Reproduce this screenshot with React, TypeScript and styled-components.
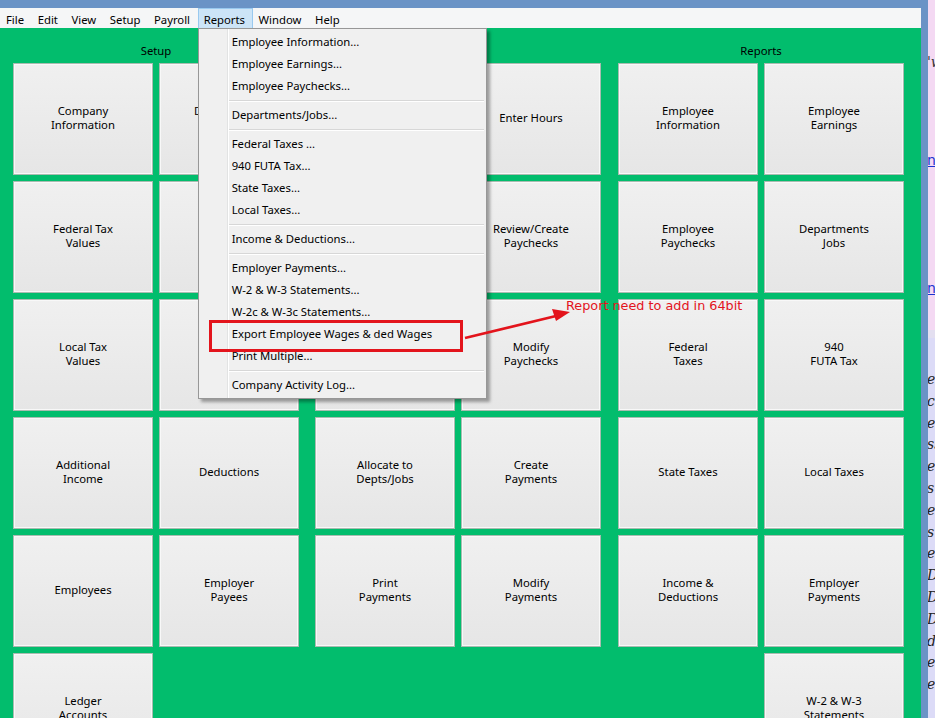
import { createGlobalStyle, styled } from 'styled-components'

type Label = string[] | null

interface Group {
  title: string
  buttons: Label[]
}

const groups: Group[] = [
  {
    title: 'Setup',
    buttons: [
      ['Company', 'Information'],
      ['Departments', 'Jobs'],
      ['Federal Tax', 'Values'],
      ['State Tax', 'Values'],
      ['Local Tax', 'Values'],
      ['Income', 'Types'],
      ['Additional', 'Income'],
      ['Deductions'],
      ['Employees'],
      ['Employer', 'Payees'],
      ['Ledger', 'Accounts'],
      null,
    ],
  },
  {
    title: 'Payroll',
    buttons: [
      ['Select', 'Employees'],
      ['Enter Hours'],
      ['Paycheck', 'Options'],
      ['Review/Create', 'Paychecks'],
      ['Print', 'Paychecks'],
      ['Modify', 'Paychecks'],
      ['Allocate to', 'Depts/Jobs'],
      ['Create', 'Payments'],
      ['Print', 'Payments'],
      ['Modify', 'Payments'],
      null,
      null,
    ],
  },
  {
    title: 'Reports',
    buttons: [
      ['Employee', 'Information'],
      ['Employee', 'Earnings'],
      ['Employee', 'Paychecks'],
      ['Departments', 'Jobs'],
      ['Federal', 'Taxes'],
      ['940', 'FUTA Tax'],
      ['State Taxes'],
      ['Local Taxes'],
      ['Income &', 'Deductions'],
      ['Employer', 'Payments'],
      null,
      ['W-2 & W-3', 'Statements'],
    ],
  },
]

const menuNames = ['File', 'Edit', 'View', 'Setup', 'Payroll', 'Reports', 'Window', 'Help']

// null marks a separator
const reportItems: (string | null)[] = [
  'Employee Information...',
  'Employee Earnings...',
  'Employee Paychecks...',
  null,
  'Departments/Jobs...',
  null,
  'Federal Taxes ...',
  '940 FUTA Tax...',
  'State Taxes...',
  'Local Taxes...',
  null,
  'Income & Deductions...',
  null,
  'Employer Payments...',
  'W-2 & W-3 Statements...',
  'W-2c & W-3c Statements...',
  'Export Employee Wages & ded Wages',
  'Print Multiple...',
  null,
  'Company Activity Log...',
]

const sideLines = ['e', 'ct', 'e', 'ss', 'e', 's', 'e', 's', 'e', 'D', 'D', 'D', 'd', 'e', 'e']

function App() {
  return (
    <>
      <GlobalStyle />
      <StScreen>
        <StWindow>
          <StTitleBar />
          <StMenuBar>
            {menuNames.map((name) => (
              <StMenuName key={name} $open={name === 'Reports'}>
                {name}
                {name === 'Reports' ? (
                  <StDropdown>
                    {reportItems.map((item, index) =>
                      item == null ? (
                        <StSeparator key={`sep${index}`} />
                      ) : (
                        <StDropItem key={item}>{item}</StDropItem>
                      )
                    )}
                  </StDropdown>
                ) : null}
              </StMenuName>
            ))}
          </StMenuBar>
          <StWorkspace>
            {groups.map((group) => (
              <StGroup key={group.title}>
                <StGroupTitle>{group.title}</StGroupTitle>
                <StButtonGrid>
                  {group.buttons.map((label, index) =>
                    label == null ? (
                      <div key={`empty${index}`} />
                    ) : (
                      <StTile key={`${group.title}${index}`}>
                        {label.map((line) => (
                          <span key={line}>{line}</span>
                        ))}
                      </StTile>
                    )
                  )}
                </StButtonGrid>
              </StGroup>
            ))}
          </StWorkspace>
        </StWindow>
        <StBackWindow>
          <StPinkPane>
            <StScrawl $top={54}>'w</StScrawl>
            <StLinkGlyph $top={152}>n</StLinkGlyph>
            <StLinkGlyph $top={280}>n</StLinkGlyph>
          </StPinkPane>
          <StBand />
          <StLavenderPane>
            {sideLines.map((line, index) => (
              <p key={`side${index}`}>{line}</p>
            ))}
          </StLavenderPane>
        </StBackWindow>
        <StAnnotation>
          <StRedBox />
          <svg width="935" height="718" viewBox="0 0 935 718">
            <line x1="465" y1="338" x2="556" y2="316" stroke="#e3141c" strokeWidth="2.6" />
            <polygon points="570,312 552,309 556,321" fill="#e3141c" />
          </svg>
          <StNote>Report need to add in 64bit</StNote>
        </StAnnotation>
      </StScreen>
    </>
  )
}

export default App

// #region styles

const GlobalStyle = createGlobalStyle`
  html, body {
    margin: 0;
    padding: 0;
    height: 100%;
    overflow: hidden;
  }
  body {
    font-family: 'Noto Sans', 'Liberation Sans', sans-serif;
    font-size: 11.3px;
    color: #000;
  }
  #root {
    height: 100%;
  }
`

const StScreen = styled.div`
  display: flex;
  height: 100%;
  position: relative;
`

const StWindow = styled.div`
  width: 921px;
  flex-shrink: 0;
  display: flex;
  flex-direction: column;
  border-right: 7px solid #6a93c6;
  box-shadow: 1px 0 0 #4d6f9a;
`

const StTitleBar = styled.div`
  height: 8px;
  flex-shrink: 0;
  background: #6a93c6;
`

const StMenuBar = styled.div`
  height: 20px;
  flex-shrink: 0;
  display: flex;
  align-items: stretch;
  background: #f5f6f7;
`

const StMenuName = styled.div<{ $open: boolean }>`
  position: relative;
  display: flex;
  align-items: center;
  padding: 1px 6.6px 0 5px;
  border: 1px solid ${(p) => (p.$open ? '#99c9ef' : 'transparent')};
  border-bottom: none;
  background: ${(p) => (p.$open ? '#cce4f7' : 'transparent')};
  white-space: nowrap;
`

const StDropdown = styled.div`
  position: absolute;
  top: 100%;
  left: -1px;
  width: 287px;
  padding: 2px 0;
  background: #f0f0f0 linear-gradient(to right, transparent 28px, #e2e3e3 28px, #e2e3e3 29px, #fff 29px, #fff 30px, transparent 30px);
  border: 1px solid #979797;
  box-shadow: 3px 3px 3px rgba(0, 0, 0, 0.35);
  z-index: 5;
`

const StDropItem = styled.div`
  height: 22px;
  line-height: 22px;
  padding-left: 33px;
  white-space: nowrap;
`

const StSeparator = styled.div`
  height: 7px;
  margin-left: 30px;
  margin-right: 2px;
  background: linear-gradient(#0000 3px, #d7d7d7 3px, #d7d7d7 4px, #fff 4px, #fff 5px, #0000 5px);
`

const StWorkspace = styled.div`
  flex-grow: 1;
  min-height: 0;
  display: flex;
  align-items: flex-start;
  padding: 14px 0 0 13px;
  background: #02bd6d;
  overflow: hidden;
  & > div + div {
    margin-left: 16px;
  }
  & > div:last-child {
    margin-left: 17px;
  }
`

const StGroup = styled.div`
  display: flex;
  flex-direction: column;
  flex-shrink: 0;
  width: 286px;
`

const StGroupTitle = styled.div`
  height: 21px;
  flex-shrink: 0;
  line-height: 17px;
  text-align: center;
`

const StButtonGrid = styled.div`
  display: grid;
  grid-template-columns: 140px 140px;
  grid-auto-rows: 112px;
  gap: 6px;
`

const StTile = styled.div`
  display: flex;
  flex-direction: column;
  align-items: center;
  justify-content: center;
  padding-bottom: 2px;
  line-height: 14px;
  text-align: center;
  background: linear-gradient(#f0f0f0, #e6e6e6);
  border: 1px solid #a9bcb1;
  box-shadow: inset 0 0 0 1px #f8f8f8;
  box-sizing: border-box;
`

const StBackWindow = styled.div`
  flex-grow: 1;
  display: flex;
  flex-direction: column;
  overflow: hidden;
  font-family: 'DejaVu Serif', serif;
  font-style: italic;
  font-size: 14px;
`

const StPinkPane = styled.div`
  position: relative;
  height: 330px;
  flex-shrink: 0;
  background: #f4d9f3;
`

const StScrawl = styled.span<{ $top: number }>`
  position: absolute;
  top: ${(p) => p.$top}px;
  left: -1px;
  color: #333;
`

const StLinkGlyph = styled.span<{ $top: number }>`
  position: absolute;
  top: ${(p) => p.$top}px;
  left: -1px;
  color: #1c35d0;
  font-style: normal;
  font-family: 'DejaVu Sans', sans-serif;
  text-decoration: underline;
`

const StBand = styled.div`
  height: 8px;
  flex-shrink: 0;
  background: #e3dff0;
`

const StLavenderPane = styled.div`
  flex-grow: 1;
  padding-top: 31px;
  background: #dcdbf7;
  color: #222;
  & > p {
    margin: 0 0 0 -1px;
    height: 21.8px;
    line-height: 21.8px;
    white-space: nowrap;
  }
`

const StAnnotation = styled.div`
  position: absolute;
  inset: 0;
  pointer-events: none;
  z-index: 10;
  & > svg {
    position: absolute;
    left: 0;
    top: 0;
  }
`

const StRedBox = styled.div`
  position: absolute;
  left: 209px;
  top: 320px;
  width: 254px;
  height: 32px;
  border: 3px solid #e3141c;
  box-sizing: border-box;
`

const StNote = styled.div`
  position: absolute;
  left: 566px;
  top: 298px;
  color: #e3141c;
  font-family: 'DejaVu Sans', sans-serif;
  font-size: 12.8px;
  white-space: nowrap;
`

// #endregion styles
